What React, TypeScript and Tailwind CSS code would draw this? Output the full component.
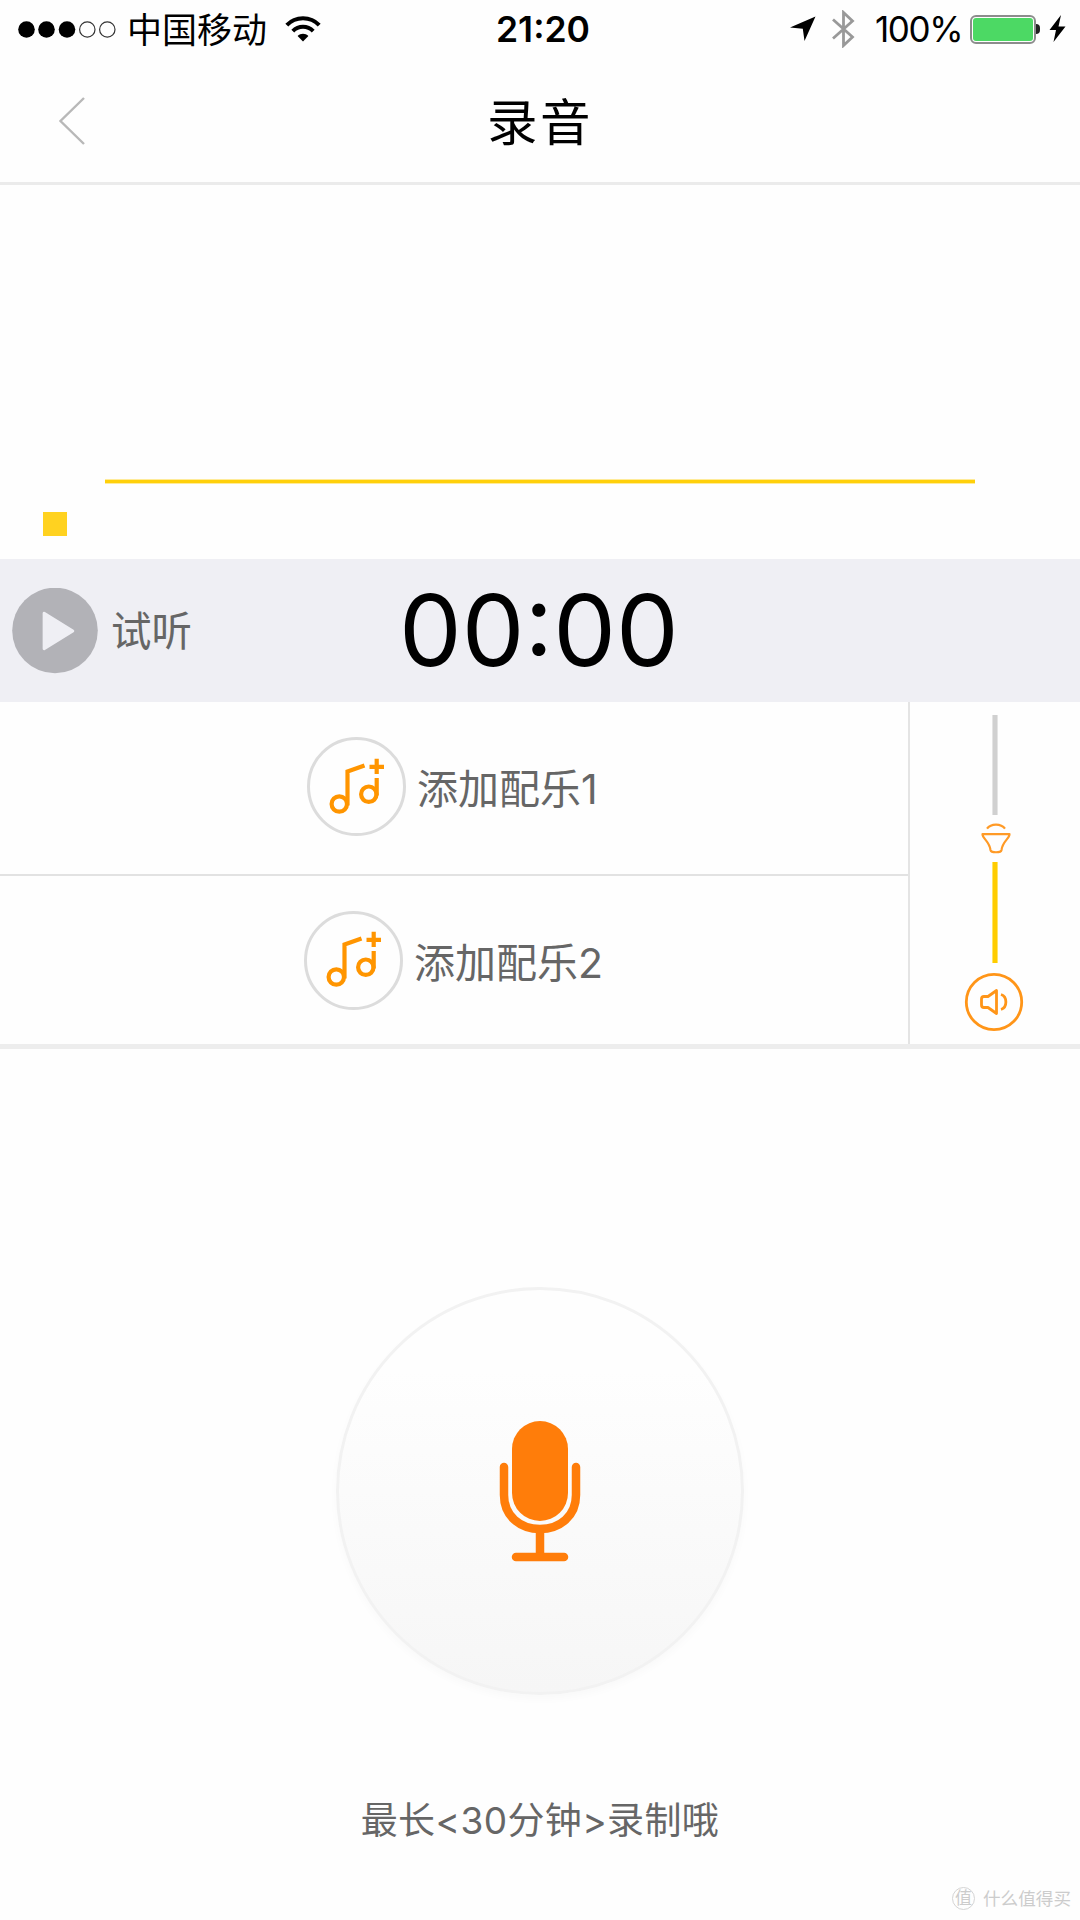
import React, { useState } from 'react';

const SignalDots = () => (
  <svg className="h-[18px] w-[100px]" viewBox="0 0 100 18">
    <circle cx="9.5" cy="9.5" r="8.3" fill="#000" />
    <circle cx="29.5" cy="9.5" r="8.3" fill="#000" />
    <circle cx="50" cy="9.5" r="8.3" fill="#000" />
    <circle cx="70.3" cy="9.5" r="7.7" fill="none" stroke="#333" strokeWidth="1.2" />
    <circle cx="90.3" cy="9.5" r="7.7" fill="none" stroke="#333" strokeWidth="1.2" />
  </svg>
);

const WifiIcon = () => (
  <svg className="h-[28px] w-[36px]" viewBox="0 0 36 28" fill="none" stroke="#000" strokeWidth="4">
    <path d="M1.8 10.2 C10.5 1 25.5 1 34.2 10.2" />
    <path d="M7.8 16.2 C13.5 10.4 22.5 10.4 28.2 16.2" />
    <path d="M12.6 21 C15.5 18 20.5 18 23.4 21 L18 26.6 Z" fill="#000" stroke="none" />
  </svg>
);

const MusicAddIcon = () => (
  <div className="flex size-[99px] shrink-0 items-center justify-center rounded-full border-[3px] border-[#dcdcdc]">
    <svg className="size-[60px]" viewBox="0 0 60 60" fill="none" stroke="#ff9500" strokeWidth="4.2">
      <circle cx="12.3" cy="47" r="7.7" />
      <path d="M20.5 48.5 V14.5 L37.5 8.5" />
      <circle cx="41.8" cy="37.2" r="7.7" />
      <path d="M49.7 38.5 V21" />
      <path d="M49.7 1.7 V17 M42.5 9.8 H57" />
    </svg>
  </div>
);

const StatusBar = () => (
  <div className="flex h-[58px] items-center pl-[17px]">
    <SignalDots />
    <span className="ml-[10px] w-[145px] pt-[2px] text-[35px] leading-none whitespace-nowrap">中国移动</span>
    <div className="ml-[13px]">
      <WifiIcon />
    </div>
    <span className="ml-[175px] w-[109px] pt-px text-[35.5px] leading-none font-semibold">21:20</span>
    <svg className="ml-[185px] h-[26px] w-[26px]" viewBox="0 0 26 26">
      <path d="M25.5 0.5 L14.5 25 L12.8 12.8 L0 11.5 Z" fill="#000" />
    </svg>
    <svg className="ml-[16px] h-[38px] w-[23px]" viewBox="0 0 23 38" fill="none" stroke="#999" strokeWidth="2.8">
      <path d="M1 9.5 L20.5 27 L11.5 35.5 V2.5 L20.5 11 L1 28.5" />
    </svg>
    <span className="ml-[20px] w-[88px] pt-px text-[35px] leading-none tracking-[-1.4px]">100%</span>
    <div className="ml-[7px] flex items-center">
      <div className="h-[29px] w-[66px] rounded-[6px] border-[2px] border-[#8c8c8c] p-[1px]">
        <div className="h-full rounded-[3px] bg-[#4cd964]" />
      </div>
      <div className="h-[10px] w-[4px] rounded-r-full bg-[#222]" />
    </div>
    <svg className="ml-[9px] h-[28px] w-[17px]" viewBox="0 0 17 28">
      <path d="M12 0 L0.5 15 H7 L4.5 27 L16.5 11.5 H9.5 Z" fill="#000" />
    </svg>
  </div>
);

const Header = () => (
  <header className="relative flex h-[127px] items-center justify-center border-b-[3px] border-[#ebebeb]">
    <button className="absolute top-[38px] left-[58px]">
      <svg className="h-[50px] w-[28px]" viewBox="0 0 28 50" fill="none" stroke="#b8b8b8" strokeWidth="2.4">
        <path d="M26 2 L2.5 25 L26 48" />
      </svg>
    </button>
    <h1 className="pt-[6px] text-[50.5px] leading-none tracking-[2.5px]">录音</h1>
  </header>
);

const Waveform = () => (
  <div className="h-[374px] pt-[294px]">
    <div className="ml-[105px] h-[5px] w-[870px] border-y border-[#ffeb99] bg-[#ffd00a]" />
    <div className="mt-[28px] ml-[43px] size-[23.5px] bg-[#ffd220]" />
  </div>
);

const PreviewBar = () => (
  <div className="flex h-[143px] items-center bg-[#efeff4] pl-[12px] text-[#666]">
    <svg className="size-[86px]" viewBox="0 0 87 87">
      <circle cx="43.5" cy="43" r="43.3" fill="#b2b2b7" />
      <path d="M32.5 25.5 L61.5 43.5 L32.5 61.5 Z" fill="#efeff4" stroke="#efeff4" strokeWidth="3" strokeLinejoin="round" />
    </svg>
    <span className="ml-[13px] w-[90px] pt-[4px] text-[40.5px] leading-none">试听</span>
    <span className="ml-[198px] pt-px text-[99.5px] leading-none text-black">00:00</span>
  </div>
);

const TrackRow = ({ label, className }: { label: string; className: string }) => (
  <div className={className}>
    <MusicAddIcon />
    <span className="ml-[11px] pt-[6px] text-[41px] leading-none whitespace-nowrap text-[#666]">{label}</span>
  </div>
);

const VolumeSlider = () => (
  <div className="flex w-[170px] flex-col items-center pt-[13px]">
    <div className="h-[100px] w-[6px] border-x border-[#e4e4e4] bg-[#d0d0d0]" />
    <svg className="mt-[7px] ml-[2px] h-[34px] w-[32px]" viewBox="0 0 32 34" fill="none" stroke="#ff9a26" strokeWidth="2.2">
      <path d="M7 6.7 C11 1.2 21 1.2 25 6.7" />
      <path d="M2.5 12.2 H29.5 C29.5 16.5 22.5 19.5 21.5 28 C21 31 11 31 10.5 28 C9.5 19.5 2.5 16.5 2.5 12.2 Z" strokeLinejoin="round" />
    </svg>
    <div className="mt-[6px] h-[101px] w-[6px] border-x border-[#ffe566] bg-[#ffcc00]" />
    <svg className="mt-[9px] mr-[3px] size-[60px]" viewBox="0 0 60 60" fill="none" stroke="#ff9518" strokeWidth="2.8">
      <circle cx="30" cy="30" r="27.7" />
      <path d="M32.5 18.5 V41.5 L24 35.5 H20 Q17.5 35.5 17.5 33 V27 Q17.5 24.5 20 24.5 H24 Z" strokeLinejoin="round" />
      <path d="M37 22.5 C43.5 24.5 43.5 35.5 37 37.5" />
    </svg>
  </div>
);

const MicIcon = () => (
  <svg className="h-[144px] w-[84px]" viewBox="0 0 84 144" fill="none" stroke="#ff7d0a" strokeWidth="8.5" strokeLinecap="round">
    <rect x="14" y="2" width="56" height="100" rx="28" fill="#ff7d0a" stroke="none" />
    <path d="M6 48 V76 C6 97 22 110 42 110 C62 110 78 97 78 76 V48" />
    <path d="M42 111 V138" strokeLinecap="butt" />
    <path d="M18 138 H66" />
  </svg>
);

const App = () => {
  const [recording, setRecording] = useState(false);

  return (
    <div className="relative h-[1920px] w-[1080px] overflow-hidden bg-[#fefefe] font-['Inter','Noto_Sans_CJK_SC',sans-serif] text-black">
      <StatusBar />
      <Header />
      <Waveform />
      <PreviewBar />

      <div className="flex h-[347px] border-b-[5px] border-[#ededed]">
        <div className="w-[910px] border-r-2 border-[#e4e4e4]">
          <TrackRow label="添加配乐1" className="flex h-[174px] items-center border-b-2 border-[#e2e2e2] pb-[3px] pl-[307px]" />
          <TrackRow label="添加配乐2" className="flex h-[168px] items-center pl-[304px]" />
        </div>
        <VolumeSlider />
      </div>

      <div className="flex flex-col items-center pt-[238px]">
        <button
          onClick={() => setRecording(!recording)}
          className="flex size-[408px] items-center justify-center rounded-full border-[3px] border-[#f2f2f2] bg-linear-to-b from-[#fefefe] from-20% to-[#f6f6f6] shadow-[0_4px_8px_rgba(0,0,0,0.025)]"
        >
          <MicIcon />
        </button>
        <p className="mt-[107px] text-[37px] leading-none tracking-[0.4px] text-[#666]">最长&lt;30分钟&gt;录制哦</p>
      </div>

      {/* community badge over the bottom corner */}
      <div className="absolute right-[9px] bottom-[10px] flex items-center text-[#ccc]">
        <span className="flex size-[23px] items-center justify-center rounded-full border border-[#d4d4d4] text-[17px] leading-none">值</span>
        <span className="ml-[8px] text-[17.6px] leading-none">什么值得买</span>
      </div>
    </div>
  );
};

export default App;
